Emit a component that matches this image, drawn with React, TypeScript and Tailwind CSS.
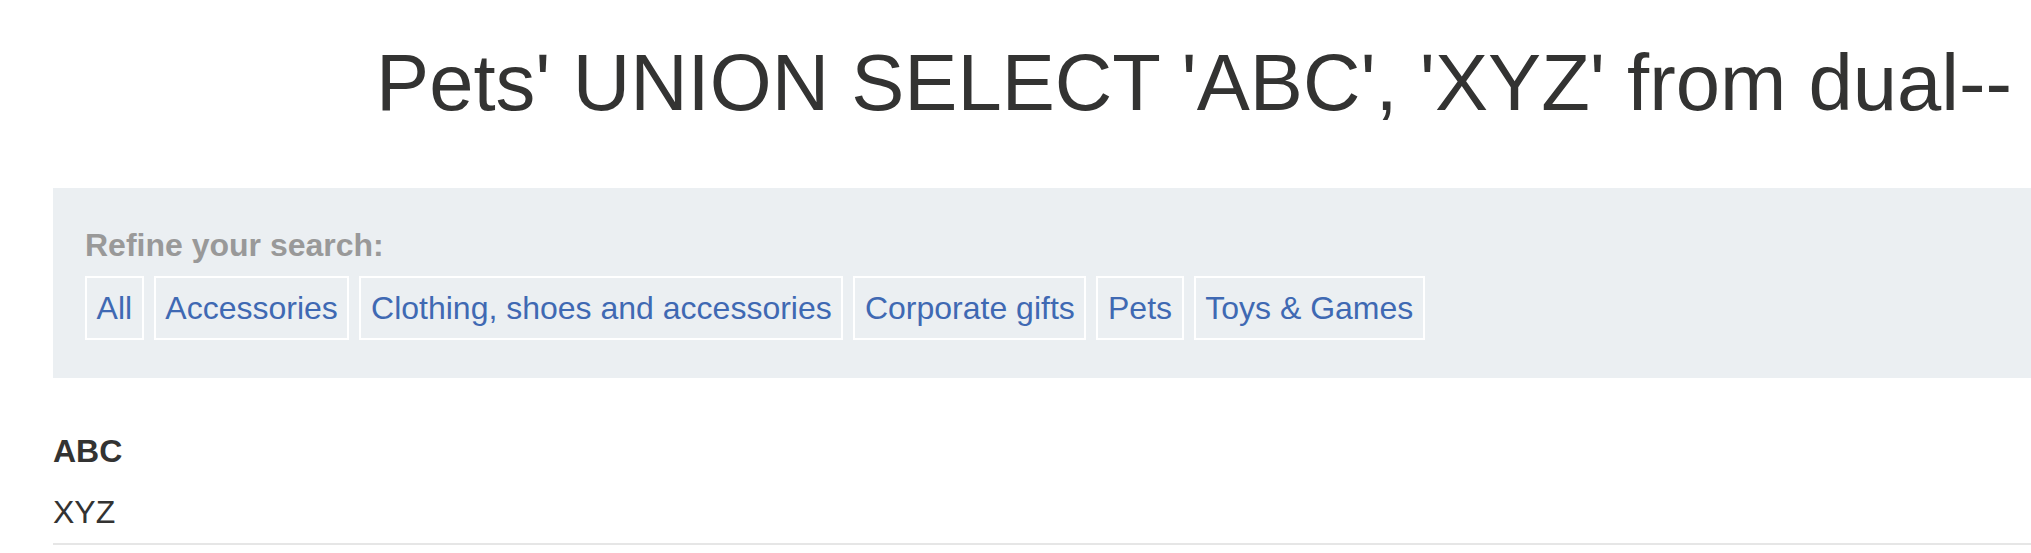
const categories = [
  "All",
  "Accessories",
  "Clothing, shoes and accessories",
  "Corporate gifts",
  "Pets",
  "Toys & Games",
];

const App = () => {
  return (
    <div
      className="h-[553px] w-[2031px] overflow-hidden bg-white text-[#333332]"
      style={{ fontFamily: '"Liberation Sans", Arial, sans-serif' }}
    >
      <div className="ml-[53px] w-[2282px]">
        <h1 className="pt-[35px] text-center text-[79.6px] leading-[96px] font-normal whitespace-nowrap">
          Pets' UNION SELECT 'ABC', 'XYZ' from dual--
        </h1>

        <section className="mt-[57px] bg-[#ebeff2] pt-[33px] pb-[38px] pl-[32px]">
          <div className="text-[32px] leading-[48px] font-bold text-[#999999]">
            Refine your search:
          </div>
          <div className="mt-[7px] flex gap-[10px]">
            {categories.map((c) => (
              <a
                key={c}
                href="#"
                className="border-2 border-white px-[9.6px] py-[10px] text-[32px] leading-[40px] whitespace-nowrap text-[#3f69b3]"
              >
                {c}
              </a>
            ))}
          </div>
        </section>

        <table className="mt-[49px] w-full border-collapse text-left text-[32px]">
          <tbody>
            <tr>
              <th className="p-0 leading-[48px] font-bold">ABC</th>
            </tr>
            <tr>
              <td className="border-b-2 border-[#e6e6e6] p-0 pt-[13px] pb-[7px] leading-[48px]">
                XYZ
              </td>
            </tr>
          </tbody>
        </table>
      </div>
    </div>
  );
};

export default App;
